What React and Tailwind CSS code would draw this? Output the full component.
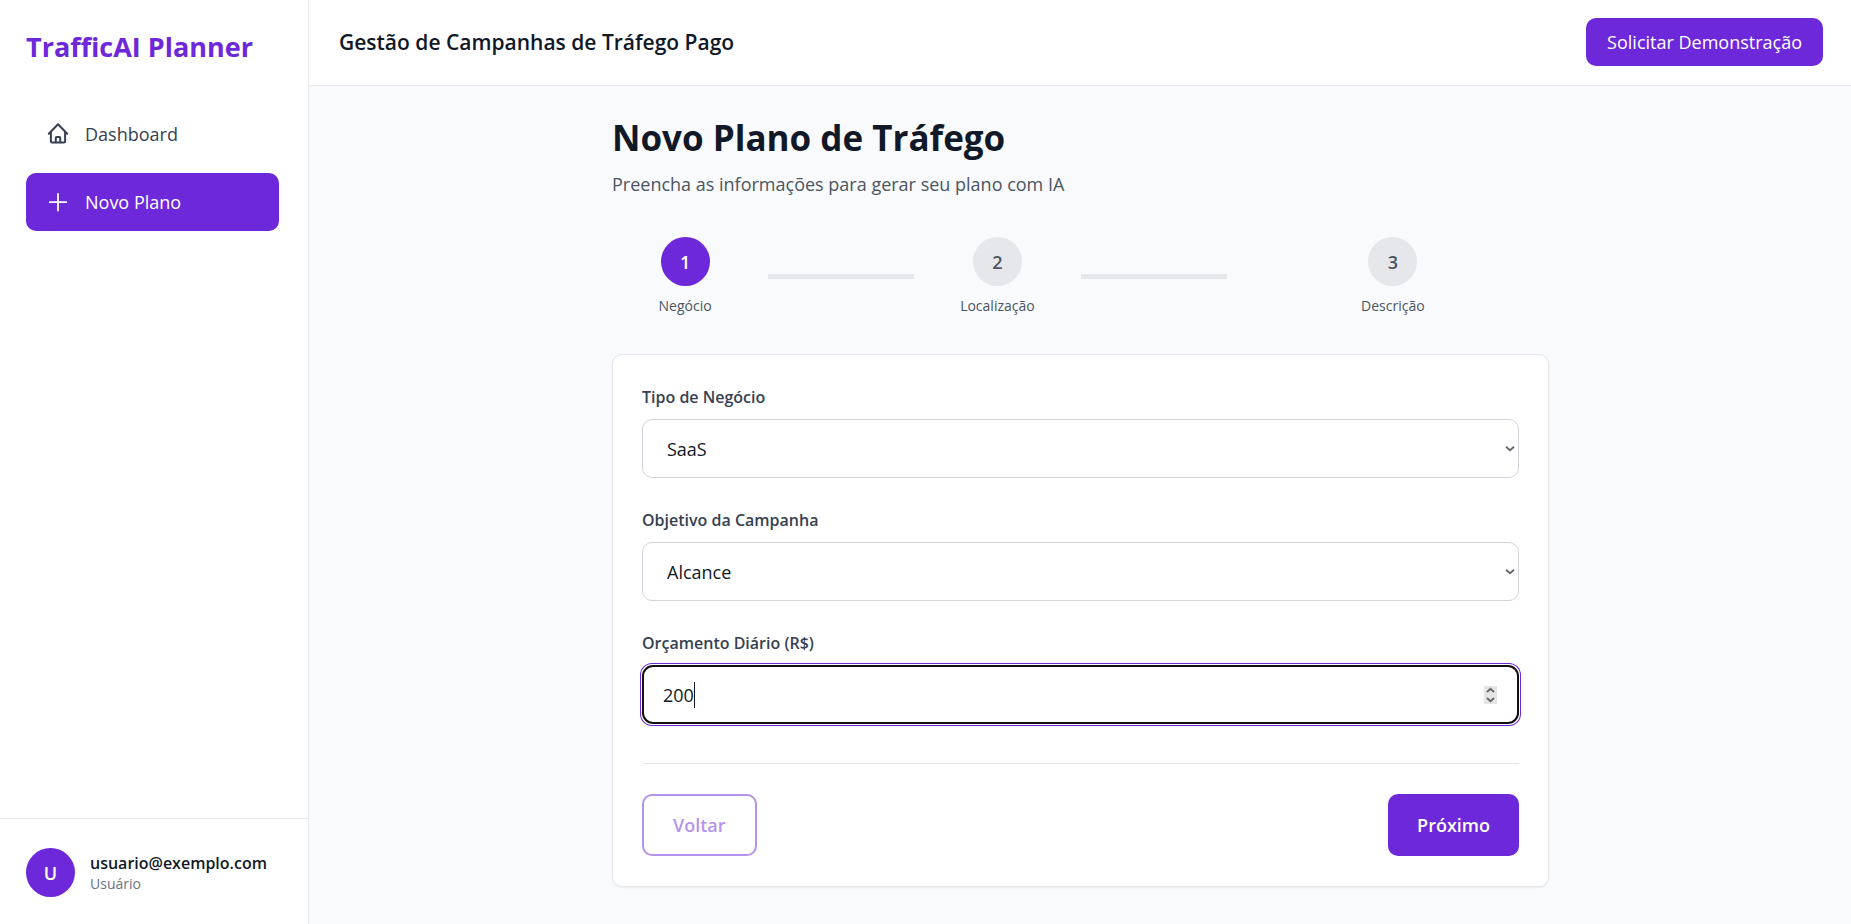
import React, { useState } from 'react';

const STEPS = [
  { number: 1, label: 'Negócio' },
  { number: 2, label: 'Localização' },
  { number: 3, label: 'Descrição' },
];

const NavIcon = ({ strokeWidth, children }) => (
  <svg
    className="h-6 w-6 shrink-0"
    viewBox="0 0 24 24"
    fill="none"
    stroke="currentColor"
    strokeWidth={strokeWidth}
    strokeLinecap="round"
    strokeLinejoin="round"
    aria-hidden="true"
  >
    {children}
  </svg>
);

const Sidebar = () => (
  <aside className="flex w-[309px] shrink-0 flex-col border-r border-gray-200 bg-white">
    <div className="px-[26px] pt-[27px]">
      <span className="text-[27px] leading-10 font-bold text-[#6d28d9]">TrafficAI Planner</span>
    </div>
    <nav className="mt-[38px] flex flex-1 flex-col gap-[10px] pr-[29px] pl-[26px]">
      <a href="#dashboard" className="flex h-[58px] items-center gap-[15px] rounded-[10px] px-5 text-[#374151]">
        <NavIcon strokeWidth="2">
          <path d="M2.8 11.8 12 2.2l9.2 9.6" />
          <path d="M4.9 10.4v9.1c0 .6.4 1 1 1h12.2c.6 0 1-.4 1-1v-9.1" />
          <path d="M9.8 20.3v-4.4c0-.5.4-.9.9-.9h2.6c.5 0 .9.4.9.9v4.4" />
        </NavIcon>
        Dashboard
      </a>
      <a href="#novo-plano" className="flex h-[58px] items-center gap-[15px] rounded-[10px] bg-[#6d28d9] px-5 text-white">
        <NavIcon strokeWidth="1.8">
          <path d="M12 4v16.5M3.8 12.2h16.5" />
        </NavIcon>
        Novo Plano
      </a>
    </nav>
    <div className="flex items-center gap-[15px] border-t border-gray-200 px-[26px] pt-[29px] pb-[27px]">
      <div className="flex h-[49px] w-[49px] shrink-0 items-center justify-center rounded-full bg-[#6d28d9] font-semibold text-white">
        U
      </div>
      <div>
        <p className="text-[16px] leading-[22px] font-semibold text-[#111827]">usuario@exemplo.com</p>
        <p className="text-[14px] leading-5 text-[#6b7280]">Usuário</p>
      </div>
    </div>
  </aside>
);

const Stepper = ({ current }) => (
  <ol className="mt-[39px] flex">
    {STEPS.map((step, index) => (
      <li key={step.number} className="flex flex-1 items-center">
        <div className="flex flex-1 flex-col items-center">
          <span
            className={`flex h-[49px] w-[49px] items-center justify-center rounded-full font-semibold ${
              step.number === current ? 'bg-[#6d28d9] text-white' : 'bg-[#e5e7eb] text-[#4b5563]'
            }`}
          >
            {step.number}
          </span>
          <span className="mt-[10px] text-[14px] leading-5 text-[#4b5563]">{step.label}</span>
        </div>
        {index < STEPS.length - 1 && <div className="mx-[10px] h-[5px] flex-1 bg-[#e5e7eb]" />}
      </li>
    ))}
  </ol>
);

const Field = ({ id, label, children }) => (
  <div className="flex flex-col gap-[10px]">
    <label htmlFor={id} className="text-[16px] leading-6 font-semibold text-[#374151]">
      {label}
    </label>
    <div className="relative">{children}</div>
  </div>
);

const SelectField = ({ id, label, options, value, onChange }) => (
  <Field id={id} label={label}>
    <select
      id={id}
      value={value}
      onChange={(e) => onChange(e.target.value)}
      className="block h-[59px] w-full appearance-none rounded-[10px] border border-[#d1d5db] bg-white px-6 text-[#111827]"
    >
      {options.map((option) => (
        <option key={option}>{option}</option>
      ))}
    </select>
    <svg
      className="pointer-events-none absolute inset-y-0 right-1 my-auto h-[10px] w-[10px] text-[#666666]"
      viewBox="0 0 10 10"
      fill="none"
      stroke="currentColor"
      strokeWidth="1.8"
      aria-hidden="true"
    >
      <path d="m1 2.8 4 3.4 4-3.4" />
    </svg>
  </Field>
);

const App = () => {
  const [business, setBusiness] = useState('SaaS');
  const [goal, setGoal] = useState('Alcance');
  const [budget, setBudget] = useState('200');

  return (
    <div className="flex min-h-screen bg-[#f9fafb] font-['Open_Sans','Noto_Sans',sans-serif] text-[18px] leading-7">
      <Sidebar />
      <div className="flex min-w-0 flex-1 flex-col">
        <header className="flex h-[86px] items-center justify-between border-b border-gray-200 bg-white pr-7 pb-[2px] pl-[30px]">
          <h2 className="text-[21px] font-semibold text-[#111827]">Gestão de Campanhas de Tráfego Pago</h2>
          <button type="button" className="h-12 rounded-[10px] bg-[#6d28d9] px-[21px] text-white">
            Solicitar Demonstração
          </button>
        </header>

        <main className="flex-1 py-[30px] pr-[30px] pl-[31px]">
          <div className="mx-auto max-w-[937px]">
            <h1 className="text-[35px] leading-[44px] font-bold text-[#111827]">Novo Plano de Tráfego</h1>
            <p className="mt-[10px] text-[#4b5563]">Preencha as informações para gerar seu plano com IA</p>

            <Stepper current={1} />

            <form
              className="mt-[38px] rounded-[10px] border border-gray-200 bg-white px-[29px] py-[30px] shadow-xs"
              onSubmit={(e) => e.preventDefault()}
            >
              <div className="flex flex-col gap-[30px]">
                <SelectField
                  id="business"
                  label="Tipo de Negócio"
                  options={['SaaS', 'E-commerce', 'Serviços']}
                  value={business}
                  onChange={setBusiness}
                />
                <SelectField
                  id="goal"
                  label="Objetivo da Campanha"
                  options={['Alcance', 'Conversões', 'Tráfego']}
                  value={goal}
                  onChange={setGoal}
                />
                <Field id="budget" label="Orçamento Diário (R$)">
                  <input
                    id="budget"
                    type="number"
                    autoFocus
                    value={budget}
                    onChange={(e) => setBudget(e.target.value)}
                    className="block h-[59px] w-full rounded-[10px] border border-[#d1d5db] bg-white px-5 text-[#111827] caret-transparent ring-2 ring-[#6d28d9] [&::-webkit-inner-spin-button]:opacity-0"
                  />
                  {/* caret sits right after the last digit */}
                  <span
                    className="pointer-events-none absolute inset-y-0 my-auto h-[26px] w-px bg-[#111827]"
                    style={{ left: `calc(21px + ${budget.length}ch)` }}
                  />
                  <svg
                    className="pointer-events-none absolute inset-y-0 right-[22px] my-auto h-[18px] w-[13px] bg-[#e5e5e5] text-[#666666]"
                    viewBox="0 0 13 18"
                    fill="none"
                    stroke="currentColor"
                    strokeWidth="1.8"
                    aria-hidden="true"
                  >
                    <path d="m3 6 3.5-3.2L10 6M3 12l3.5 3.2L10 12" />
                  </svg>
                </Field>
              </div>

              <div className="mt-[39px] flex items-center justify-between border-t border-gray-200 pt-[30px]">
                <button
                  type="button"
                  disabled
                  className="h-[62px] rounded-[10px] border-2 border-[#6d28d9] px-[29px] font-semibold text-[#6d28d9] opacity-50"
                >
                  Voltar
                </button>
                <button type="submit" className="h-[62px] rounded-[10px] bg-[#6d28d9] px-[29px] font-semibold text-white">
                  Próximo
                </button>
              </div>
            </form>
          </div>
        </main>
      </div>
    </div>
  );
};

export default App;
